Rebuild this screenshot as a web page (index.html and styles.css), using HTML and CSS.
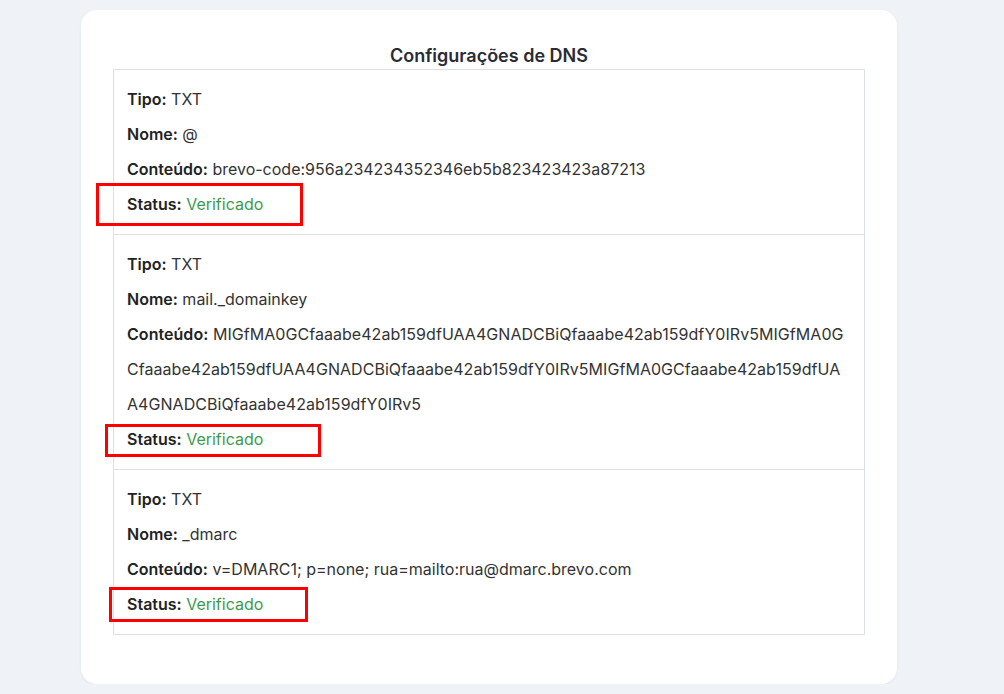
FILE: index.html
```html
<!DOCTYPE html>
<html>
<head>
    <title>Configurações de DNS</title>
    <link rel="stylesheet" href="styles.css">
</head>
<body>
    <div class="dns-card">
        <h2 class="dns-title">Configurações de DNS</h2>
        <div class="dns-list">
            <div class="dns-record">
                <p><b>Tipo:</b> TXT</p>
                <p><b>Nome:</b> @</p>
                <p><b>Conteúdo:</b> brevo-code:956a234234352346eb5b823423423a87213</p>
                <p><b>Status:</b> <span class="ok">Verificado</span></p>
                <div class="mark mark--one"></div>
            </div>
            <div class="dns-record">
                <p><b>Tipo:</b> TXT</p>
                <p><b>Nome:</b> mail._domainkey</p>
                <p class="long"><b>Conteúdo:</b> MIGfMA0GCfaaabe42ab159dfUAA4GNADCBiQfaaabe42ab159dfY0IRv5MIGfMA0GCfaaabe42ab159dfUAA4GNADCBiQfaaabe42ab159dfY0IRv5MIGfMA0GCfaaabe42ab159dfUAA4GNADCBiQfaaabe42ab159dfY0IRv5</p>
                <p><b>Status:</b> <span class="ok">Verificado</span></p>
                <div class="mark mark--two"></div>
            </div>
            <div class="dns-record">
                <p><b>Tipo:</b> TXT</p>
                <p><b>Nome:</b> _dmarc</p>
                <p><b>Conteúdo:</b> v=DMARC1; p=none; rua=mailto:rua@dmarc.brevo.com</p>
                <p><b>Status:</b> <span class="ok">Verificado</span></p>
                <div class="mark mark--three"></div>
            </div>
        </div>
    </div>
</body>
</html>
```

FILE: styles.css
```css
body {
    margin: 0;
    background-color: #eff2f7;
    font-family: "Inter", "Liberation Sans", sans-serif;
    color: #333;
}
.dns-card {
    width: 816px;
    box-sizing: border-box;
    margin: 10px 0 0 81px;
    padding: 34px 32px 49px;
    background-color: #fff;
    border-radius: 16px;
    box-shadow: 0 1px 3px rgba(0, 0, 0, 0.06);
}
.dns-title {
    margin: 0 0 1px;
    text-align: center;
    font-size: 18px;
    line-height: 24px;
    font-weight: 600;
    color: #2b2b36;
}
.dns-list {
    border: 1px solid #dcdfe4;
}
.dns-record {
    position: relative;
    padding: 12px 13px 12px;
}
.dns-record + .dns-record {
    border-top: 1px solid #dcdfe4;
}
.dns-record p {
    margin: 0;
    font-size: 16px;
    line-height: 35px;
}
.dns-record b {
    font-weight: 600;
    color: #222;
}
.long {
    word-break: break-all;
    letter-spacing: 0.05px;
}
.ok {
    color: #3d9a4c;
}

/* red annotation boxes */
.mark {
    position: absolute;
    border: 3px solid #f00;
    box-sizing: border-box;
}
.mark--one {
    left: -18px;
    top: 113px;
    width: 207px;
    height: 43px;
}
.mark--two {
    left: -9px;
    top: 189px;
    width: 216px;
    height: 33px;
}
.mark--three {
    left: -5px;
    top: 117px;
    width: 199px;
    height: 35px;
}
```
